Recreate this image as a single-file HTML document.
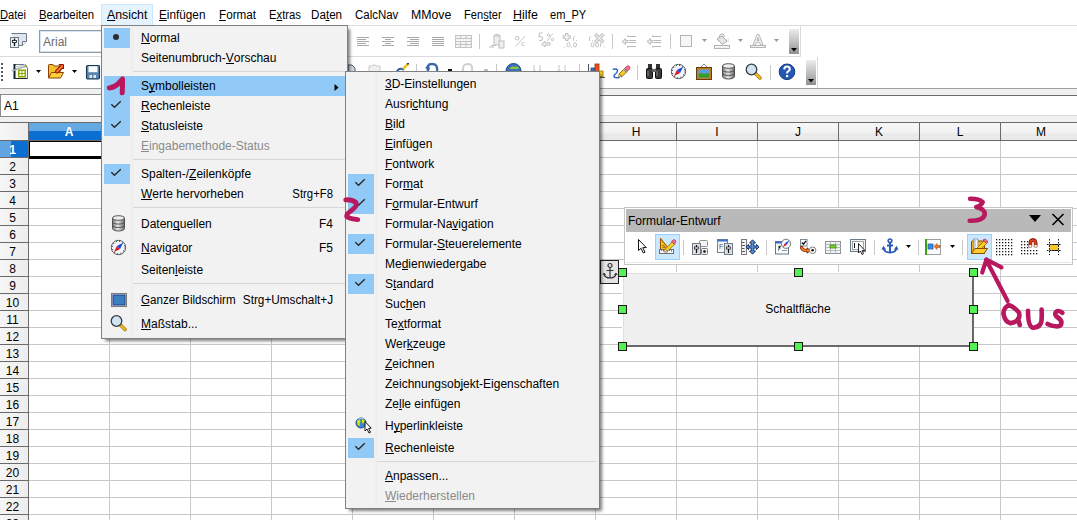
<!DOCTYPE html><html><head><meta charset="utf-8"><style>
*{margin:0;padding:0;box-sizing:border-box}
html,body{width:1077px;height:520px;overflow:hidden;background:#fff}
body{position:relative;font-family:"Liberation Sans",sans-serif;font-size:12px;color:#000}
.a{position:absolute}
.t{position:absolute;white-space:pre;line-height:14px;font-size:12px}
u{text-decoration:none;border-bottom:1px solid currentColor;display:inline-block;line-height:12px;height:12px}
</style></head><body>
<div class="a" style="left:0px;top:25px;width:1077px;height:1px;background:#dadada"></div>
<div class="a" style="left:101px;top:4px;width:52px;height:21px;background:#e5f3ff;border:1px solid #cce8ff;border-bottom:none"></div>
<div class="t " style="left:0.4px;top:8px;transform:scaleX(0.93);transform-origin:0 0;"><u>D</u>atei</div>
<div class="t " style="left:39.4px;top:8px;transform:scaleX(0.948);transform-origin:0 0;"><u>B</u>earbeiten</div>
<div class="t " style="left:107px;top:8px;transform:scaleX(1.026);transform-origin:0 0;"><u>A</u>nsicht</div>
<div class="t " style="left:159.4px;top:8px;transform:scaleX(0.98);transform-origin:0 0;"><u>E</u>infügen</div>
<div class="t " style="left:218.6px;top:8px;transform:scaleX(0.974);transform-origin:0 0;"><u>F</u>ormat</div>
<div class="t " style="left:268.7px;top:8px;transform:scaleX(0.94);transform-origin:0 0;">E<u>x</u>tras</div>
<div class="t " style="left:311.4px;top:8px;transform:scaleX(0.97);transform-origin:0 0;">Da<u>t</u>en</div>
<div class="t " style="left:354.5px;top:8px;transform:scaleX(0.955);transform-origin:0 0;">CalcNav</div>
<div class="t " style="left:410.5px;top:8px;transform:scaleX(1.026);transform-origin:0 0;">MMove</div>
<div class="t " style="left:463.7px;top:8px;transform:scaleX(0.925);transform-origin:0 0;">Fen<u>s</u>ter</div>
<div class="t " style="left:513.2px;top:8px;transform:scaleX(1.04);transform-origin:0 0;"><u>H</u>ilfe</div>
<div class="t " style="left:550.3px;top:8px;transform:scaleX(0.92);transform-origin:0 0;">em_PY</div>
<div class="a" style="left:0px;top:56px;width:801px;height:1px;background:#dadada"></div>
<div class="a" style="left:800px;top:26px;width:1px;height:31px;background:#dadada"></div>
<div class="a" style="left:817px;top:57px;width:1px;height:31px;background:#dadada"></div>
<div class="a" style="left:0px;top:88px;width:1077px;height:1px;background:#a0a0a0"></div>
<div class="a" style="left:0px;top:89px;width:1077px;height:6px;background:#f0f0f0"></div>
<div class="a" style="left:0px;top:95px;width:1077px;height:1px;background:#6a6a6a"></div>
<div class="a" style="left:0px;top:115px;width:1077px;height:1px;background:#dcdcdc"></div>
<div class="a" style="left:0px;top:116px;width:1077px;height:6px;background:#f0f0f0"></div>
<div class="a" style="left:0px;top:122px;width:1077px;height:1px;background:#6a6a6a"></div>
<div class="a" style="left:0px;top:94px;width:102px;height:23px;background:#fff;border:1px solid #8a8a8a"></div>
<div class="t " style="left:4px;top:99px;">A1</div>
<svg class="a" style="left:9px;top:32px;" width="19" height="17" viewBox="0 0 19 17"><path d="M2.5 1.5 H17.5 V9.5 L13.5 13.5 H8" fill="#dfe5ee" stroke="#6e7a85"/><path d="M17.5 9.5 H13.5 V13.5" fill="#fff" stroke="#6e7a85"/><rect x="1.5" y="5.5" width="8" height="10" fill="#eef0f2" stroke="#6e7a85"/><path d="M5.5 6.5 V14" stroke="#111" stroke-width="1.3"/><rect x="3.5" y="8.5" width="4" height="2" fill="#fff" stroke="#111" stroke-width=".8"/></svg>
<div class="a" style="left:39px;top:30px;width:70px;height:23px;background:#fff;border:1px solid #9a9a9a;box-shadow:inset 0 0 0 1px #cfe6fb"></div>
<div class="t " style="left:43px;top:35px;color:#6d6d6d;">Arial</div>
<div class="a" style="left:357px;top:37px;width:12px;height:1px;background:#a8a8a8"></div><div class="a" style="left:357px;top:39px;width:9px;height:1px;background:#a8a8a8"></div><div class="a" style="left:357px;top:41px;width:12px;height:1px;background:#a8a8a8"></div><div class="a" style="left:357px;top:43px;width:9px;height:1px;background:#a8a8a8"></div><div class="a" style="left:357px;top:45px;width:12px;height:1px;background:#a8a8a8"></div>
<div class="a" style="left:382px;top:37px;width:12px;height:1px;background:#a8a8a8"></div><div class="a" style="left:385px;top:39px;width:6px;height:1px;background:#a8a8a8"></div><div class="a" style="left:382px;top:41px;width:12px;height:1px;background:#a8a8a8"></div><div class="a" style="left:385px;top:43px;width:6px;height:1px;background:#a8a8a8"></div><div class="a" style="left:382px;top:45px;width:12px;height:1px;background:#a8a8a8"></div>
<div class="a" style="left:407px;top:37px;width:12px;height:1px;background:#a8a8a8"></div><div class="a" style="left:410px;top:39px;width:9px;height:1px;background:#a8a8a8"></div><div class="a" style="left:407px;top:41px;width:12px;height:1px;background:#a8a8a8"></div><div class="a" style="left:410px;top:43px;width:9px;height:1px;background:#a8a8a8"></div><div class="a" style="left:407px;top:45px;width:12px;height:1px;background:#a8a8a8"></div>
<div class="a" style="left:432px;top:37px;width:12px;height:1px;background:#a8a8a8"></div><div class="a" style="left:432px;top:39px;width:12px;height:1px;background:#a8a8a8"></div><div class="a" style="left:432px;top:41px;width:12px;height:1px;background:#a8a8a8"></div><div class="a" style="left:432px;top:43px;width:12px;height:1px;background:#a8a8a8"></div><div class="a" style="left:432px;top:45px;width:12px;height:1px;background:#a8a8a8"></div>
<svg class="a" style="left:455px;top:35px;" width="17" height="13" viewBox="0 0 17 13"><rect x=".5" y=".5" width="16" height="12" fill="#f4f4f4" stroke="#c4c4c4"/><path d="M.5 3.5 H16.5 M.5 6.5 H16.5 M.5 9.5 H16.5 M5.5 .5 V3.5 M11 .5 V3.5 M5.5 6.5 V12.5 M11 6.5 V12.5" stroke="#c4c4c4"/></svg>
<div class="a" style="left:479px;top:34px;width:1px;height:15px;background:#c8c8c8"></div>
<svg class="a" style="left:488px;top:33px;" width="17" height="16" viewBox="0 0 17 16"><g fill="#eee" stroke="#c0c0c0"><ellipse cx="9" cy="3" rx="3" ry="1.5"/><rect x="6" y="3" width="6" height="9"/><rect x="11" y="8" width="5" height="7"/></g><path d="M1 14 H6 M3 12.5 H8" stroke="#c0c0c0"/></svg>
<svg class="a" style="left:514px;top:35px;" width="12" height="12" viewBox="0 0 12 12"><circle cx="3.2" cy="3.2" r="1.8" fill="none" stroke="#c4c4c4"/><path d="M2 11 L11 1" stroke="#c4c4c4"/><path d="M10.5 7.8 Q9.5 7 8.3 7.5 Q7 8.5 7.8 10 Q9 11 10.5 10" fill="none" stroke="#c4c4c4"/></svg>
<svg class="a" style="left:537px;top:32px;" width="19" height="16" viewBox="0 0 19 16"><path d="M5.5 1 H2.5 L2 4.5 Q5.5 4 5.5 6.5 Q5.5 9 2 8.5" fill="none" stroke="#c4c4c4" stroke-width="1.1"/><circle cx="11.5" cy="3" r="1.2" fill="none" stroke="#c4c4c4"/><path d="M10 9 L16 1.5" stroke="#c4c4c4"/><circle cx="15.5" cy="7.5" r="1.2" fill="none" stroke="#c4c4c4"/><path d="M4.5 12 L8 9 V10.8 H13 V13.2 H8 V15 Z" fill="#ececec" stroke="#bcbcbc" stroke-width=".9"/></svg>
<svg class="a" style="left:562px;top:32px;" width="18" height="16" viewBox="0 0 18 16"><path d="M3.5 1.5 H6 V3.8 H8.3 V6.3 H6 V8.5 H3.5 V6.3 H1.2 V3.8 H3.5 Z" fill="#f4f4f4" stroke="#bdbdbd"/><path d="M11.5 9 V5.5 Q11.5 4.5 13 4.5" fill="none" stroke="#c4c4c4"/><rect x="14" y="8" width="1" height="1" fill="#c4c4c4"/><path d="M2 15 H3 M6.5 10.5 Q5 10.5 5 12.8 Q5 15 6.5 15 Q8 15 8 12.8 Q8 10.5 6.5 10.5 M9 15 H10 M13 10.5 Q11.5 10.5 11.5 12.8 Q11.5 15 13 15 Q14.5 15 14.5 12.8 Q14.5 10.5 13 10.5" fill="none" stroke="#c4c4c4"/></svg>
<svg class="a" style="left:588px;top:32px;" width="18" height="16" viewBox="0 0 18 16"><path d="M1.5 9 V5.5 Q1.5 4.5 3 4.5" fill="none" stroke="#c4c4c4"/><rect x="4" y="8" width="1" height="1" fill="#c4c4c4"/><path d="M7 2 L15.5 10.5 M15.5 2 L7 10.5" stroke="#bdbdbd" stroke-width="3.2"/><path d="M7 2 L15.5 10.5 M15.5 2 L7 10.5" stroke="#f0f0f0" stroke-width="1.2"/><path d="M4.5 10.5 Q3 10.5 3 12.8 Q3 15 4.5 15 Q6 15 6 12.8 Q6 10.5 4.5 10.5 M9 10.5 Q7.5 10.5 7.5 12.8 Q7.5 15 9 15 Q10.5 15 10.5 12.8 Q10.5 10.5 9 10.5 M12.5 15 V11.5 Q12.5 10.5 14 10.5 M15.5 15 H16.5" fill="none" stroke="#c4c4c4"/></svg>
<div class="a" style="left:612px;top:34px;width:1px;height:15px;background:#c8c8c8"></div>
<svg class="a" style="left:621px;top:34px;" width="17" height="15" viewBox="0 0 17 15"><path d="M6 2.5 H15 M7.5 6.5 H15 M7.5 8.5 H15 M6 12.5 H15" stroke="#b8b8b8"/><path d="M7 1 V3 M7 12 V14" stroke="#c8c8c8"/><path d="M1 7.5 L4.5 4.5 V6.5 H6.5 V8.5 H4.5 V10.5 Z" fill="#e8e8e8" stroke="#b0b0b0" stroke-width=".8"/></svg>
<svg class="a" style="left:646px;top:34px;" width="17" height="15" viewBox="0 0 17 15"><path d="M6 2.5 H15 M7.5 6.5 H15 M7.5 8.5 H15 M6 12.5 H15" stroke="#b8b8b8"/><path d="M7 1 V3 M7 12 V14" stroke="#c8c8c8"/><path d="M1 7.5 L4.5 4.5 V6.5 H6.5 V8.5 H4.5 V10.5 Z" fill="#e8e8e8" stroke="#b0b0b0" stroke-width=".8"/></svg>
<div class="a" style="left:670px;top:34px;width:1px;height:15px;background:#c8c8c8"></div>
<div class="a" style="left:680px;top:35px;width:12px;height:12px;background:#f6f6f6;border:1px solid #b4b4b4"></div>
<svg class="a" style="left:702px;top:39px;" width="5" height="3" viewBox="0 0 5 3"><path d="M0 0 H5 L2.5 3 Z" fill="#9a9a9a"/></svg>
<svg class="a" style="left:714px;top:33px;" width="17" height="16" viewBox="0 0 17 16"><path d="M3 6 L8 3 L13 8 L8.5 11.5 Z" fill="#e4e4e4" stroke="#a8a8a8"/><path d="M13 8 L15 10 L15 4 Z" fill="#e8e8e8"/><path d="M5 4 Q6 0 9 1 Q11 2 10 4 M7 3.5 L9 3" fill="none" stroke="#b0b0b0"/><rect x=".5" y="12.5" width="15" height="3" fill="#f2f2f2" stroke="#b4b4b4"/></svg>
<svg class="a" style="left:738px;top:39px;" width="5" height="3" viewBox="0 0 5 3"><path d="M0 0 H5 L2.5 3 Z" fill="#9a9a9a"/></svg>
<svg class="a" style="left:750px;top:33px;" width="16" height="13" viewBox="0 0 16 13"><path d="M3 12 L7 1.5 H9 L13 12 H10.5 L9.6 9.5 H6.4 L5.5 12 Z M7 7.5 H9 L8 4.5 Z" fill="#f0f0f0" stroke="#b8b8b8"/></svg>
<div class="a" style="left:750px;top:45px;width:16px;height:3px;background:#f2f2f2;border:1px solid #b4b4b4"></div>
<svg class="a" style="left:774px;top:39px;" width="5" height="3" viewBox="0 0 5 3"><path d="M0 0 H5 L2.5 3 Z" fill="#9a9a9a"/></svg>
<div class="a" style="left:789px;top:29px;width:10px;height:25px;background:linear-gradient(#ececec,#b8b8b8 60%,#8e8e8e)"></div><svg class="a" style="left:791px;top:48px;" width="6" height="4" viewBox="0 0 6 4"><path d="M0 0 H6 L3 3.5 Z" fill="#000"/></svg>
<div class="a" style="left:1px;top:63px;width:2px;height:2px;background:#5a5a5a"></div>
<div class="a" style="left:1px;top:67px;width:2px;height:2px;background:#5a5a5a"></div>
<div class="a" style="left:1px;top:71px;width:2px;height:2px;background:#5a5a5a"></div>
<div class="a" style="left:1px;top:75px;width:2px;height:2px;background:#5a5a5a"></div>
<div class="a" style="left:1px;top:79px;width:2px;height:2px;background:#5a5a5a"></div>
<svg class="a" style="left:11px;top:63px;" width="18" height="17" viewBox="0 0 18 17"><path d="M3.5 1.5 H13 L16.5 5 V15.5 H3.5 Z" fill="#fbfbfb" stroke="#6a7480"/><path d="M3.5 1 V16" stroke="#101c30" stroke-width="2"/><path d="M3 15.5 H16.5" stroke="#202830"/><path d="M1 8 Q8 5 16 3" stroke="#a8b0b8" stroke-width="1.5" fill="none"/><path d="M4 4 Q10 3 14 2" stroke="#c0c8d0" stroke-width="1.2" fill="none"/><path d="M14 1.5 L16 4" stroke="#7a9a10" stroke-width="1.2"/><rect x="7" y="6.5" width="8" height="8" fill="#8aaa00"/><rect x="8.5" y="8" width="2" height="2" fill="#fff"/><rect x="11.5" y="8" width="2" height="2" fill="#fff"/><rect x="8.5" y="11" width="2" height="2" fill="#fff"/><rect x="11.5" y="11" width="2" height="2" fill="#fff"/></svg>
<svg class="a" style="left:36px;top:70px;" width="5" height="3" viewBox="0 0 5 3"><path d="M0 0 H5 L2.5 3 Z" fill="#000"/></svg>
<svg class="a" style="left:47px;top:63px;" width="18" height="17" viewBox="0 0 18 17"><path d="M1.5 14.5 V2.2 Q1.5 1.5 2.2 1.5 H6 L7 3 H13 V14.5 Z" fill="#f6c030" stroke="#8a4000" stroke-width="1" stroke-linejoin="round"/><path d="M1.5 15 L4.5 9.5 H16.5 L13.5 15 Z" fill="#ffd040" stroke="#8a4000" stroke-width="1" stroke-linejoin="round"/><path d="M10 8.5 L14.5 4" stroke="#901800" stroke-width="4" stroke-linecap="round"/><path d="M12 1.5 H16.5 V6 Z" fill="#f06020" stroke="#901800" stroke-width="1" stroke-linejoin="round"/><path d="M10 8.5 L14.5 4" stroke="#f87830" stroke-width="2" stroke-linecap="round"/></svg>
<svg class="a" style="left:72px;top:70px;" width="5" height="3" viewBox="0 0 5 3"><path d="M0 0 H5 L2.5 3 Z" fill="#000"/></svg>
<svg class="a" style="left:85px;top:64px;" width="16" height="16" viewBox="0 0 16 16"><rect x="1.5" y="1.5" width="13" height="13.5" rx="1.2" fill="#5a86b0" stroke="#173556" stroke-width="1.1"/><rect x="3.5" y="2.2" width="9" height="6" fill="#fbfbfb"/><rect x="4.5" y="11" width="2.5" height="3" fill="#e4e8ec"/><rect x="8.5" y="11" width="2.5" height="3" fill="#e4e8ec"/></svg>
<svg class="a" style="left:347px;top:63px;" width="10" height="9" viewBox="0 0 10 9"><path d="M1 8 V2 H5 L8 5 V8" fill="#cfd6de" stroke="#505a64"/></svg>
<svg class="a" style="left:366px;top:63px;" width="17" height="9" viewBox="0 0 17 9"><path d="M3 8 V3 H6 Q8 0 10 3 H14 V8" fill="#f0f0f0" stroke="#c8c8c8"/></svg>
<svg class="a" style="left:395px;top:63px;" width="15" height="9" viewBox="0 0 15 9"><path d="M2 8 Q5 4 9 7" stroke="#2a60b0" stroke-width="2" fill="none"/><path d="M8 6 L13 1" stroke="#f0c020" stroke-width="2.5"/><path d="M12 1 L14 .5" stroke="#333" stroke-width="1.5"/></svg>
<div class="a" style="left:416px;top:64px;width:1px;height:8px;background:#c8c8c8"></div>
<svg class="a" style="left:423px;top:62px;" width="18" height="10" viewBox="0 0 18 10"><path d="M5 9 Q3 2 9 2 Q15 2 14 9" stroke="#3c68a8" stroke-width="2.3" fill="none"/><path d="M2 6 L6 2 L7 8 Z" fill="#3c68a8"/></svg>
<div class="a" style="left:448px;top:69px;width:4px;height:2px;background:#111"></div>
<svg class="a" style="left:460px;top:62px;" width="16" height="10" viewBox="0 0 16 10"><path d="M3 9 Q2 2 8 2 Q13 2 12 9" stroke="#cfcfcf" stroke-width="2" fill="none"/></svg>
<div class="a" style="left:484px;top:69px;width:4px;height:2px;background:#c0c0c0"></div>
<div class="a" style="left:496px;top:64px;width:1px;height:8px;background:#c8c8c8"></div>
<svg class="a" style="left:505px;top:63px;" width="17" height="9" viewBox="0 0 17 9"><circle cx="8.5" cy="8" r="7.5" fill="#3a70b8" stroke="#1e4a8a"/><path d="M4 6 Q7 2 10 4 Q13 2 14 6" fill="#8cc43c"/></svg>
<svg class="a" style="left:531px;top:64px;" width="13" height="8" viewBox="0 0 13 8"><path d="M3 7 V1 M9 7 V1 M2 7 H5 M8 7 H11" stroke="#c8c8c8"/></svg>
<svg class="a" style="left:556px;top:64px;" width="13" height="8" viewBox="0 0 13 8"><path d="M3 7 V1 M9 7 V1 M1 7 H5" stroke="#c8c8c8"/></svg>
<div class="a" style="left:579px;top:64px;width:1px;height:8px;background:#c8c8c8"></div>
<div class="a" style="left:588px;top:64px;width:1px;height:8px;background:#505050"></div>
<svg class="a" style="left:589px;top:63px;" width="16" height="16" viewBox="0 0 16 16"><rect x="2" y="5" width="4" height="9" fill="#3a70b8" stroke="#1e4a8a" stroke-width=".8"/><rect x="6" y="1" width="4" height="13" fill="#e8501c" stroke="#a02a08" stroke-width=".8"/><rect x="10" y="8" width="4" height="6" fill="#f2c22c" stroke="#a07808" stroke-width=".8"/><path d="M0 14.5 H16" stroke="#555"/></svg>
<svg class="a" style="left:608px;top:60px;" width="28" height="22" viewBox="0 0 28 22"><path d="M5.3 9.3 Q8 8.5 9.5 10 Q10 12 7.5 14 Q5 16 6.5 17.3 Q8 18 11 17.5" stroke="#2a6ad0" stroke-width="1.5" fill="none" stroke-linecap="round"/><path d="M11.2 13.8 L15.5 9.5 L18.3 12.3 L14 16.6 Z" fill="#f8cc18" stroke="#6a5010" stroke-width=".8" stroke-linejoin="round"/><path d="M10.5 17.3 L11.2 13.8 L14 16.6 Z" fill="#f4e8d0" stroke="#6a5010" stroke-width=".7" stroke-linejoin="round"/><path d="M15.5 9.5 L16.5 8.5 L19.3 11.3 L18.3 12.3 Z" fill="#b8c0c8" stroke="#606870" stroke-width=".6"/><path d="M16.5 8.5 L18.6 6.3 Q20 5.2 21.4 6.3 L21.6 6.6 Q22.6 8 21.4 9.2 L19.3 11.3 Z" fill="#f07088" stroke="#a03050" stroke-width=".7"/></svg>
<div class="a" style="left:637px;top:65px;width:1px;height:15px;background:#c8c8c8"></div>
<svg class="a" style="left:645px;top:63px;" width="18" height="17" viewBox="0 0 18 17"><rect x="3" y="1" width="4" height="5" fill="#333"/><rect x="11" y="1" width="4" height="5" fill="#333"/><rect x="1.5" y="5.5" width="6" height="10" rx="1" fill="#3a3a3a" stroke="#111"/><rect x="10.5" y="5.5" width="6" height="10" rx="1" fill="#3a3a3a" stroke="#111"/><rect x="7" y="6" width="4" height="3" fill="#666"/><path d="M3 8 V13 M12 8 V13" stroke="#888"/></svg>
<svg class="a" style="left:670px;top:63px;" width="17" height="17" viewBox="0 0 17 17"><circle cx="8.5" cy="8.5" r="7.2" fill="#f2f5f9" stroke="#5a5a5a" stroke-width="1"/><circle cx="8.5" cy="8.5" r="6.2" fill="none" stroke="#444" stroke-width="1.1" stroke-dasharray="0.9 2.35"/><path d="M4 13 L6.9 6.9 L10.1 10.1 Z" fill="#e01818"/><path d="M13.2 3.8 L6.9 6.9 L10.1 10.1 Z" fill="#1a48e0"/></svg>
<svg class="a" style="left:695px;top:62px;" width="18" height="19" viewBox="0 0 18 19"><path d="M6 5 L9 2 L12 5" fill="none" stroke="#888"/><rect x="1.5" y="5.5" width="15" height="12" fill="#c08018" stroke="#6a3a08"/><rect x="3.5" y="7.5" width="11" height="8" fill="#5aa0e0"/><path d="M3.5 12 Q7 10 9 12 Q12 10 14.5 12 V15.5 H3.5 Z" fill="#3a9a2a"/></svg>
<svg class="a" style="left:721px;top:63px;" width="15" height="17" viewBox="0 0 15 17"><defs><linearGradient id="dbg2" x1="0" x2="1"><stop offset="0" stop-color="#7d7d7d"/><stop offset=".45" stop-color="#e8e8e8"/><stop offset="1" stop-color="#6a6a6a"/></linearGradient></defs><path d="M1.5 3 V13.5 A6 2.5 0 0 0 13.5 13.5 V3" fill="url(#dbg2)" stroke="#505050"/><ellipse cx="7.5" cy="3" rx="6" ry="2.3" fill="#eee" stroke="#505050"/><path d="M1.5 6.8 A6 2.3 0 0 0 13.5 6.8 M1.5 10.2 A6 2.3 0 0 0 13.5 10.2" fill="none" stroke="#505050"/></svg>
<svg class="a" style="left:745px;top:63px;" width="17" height="17" viewBox="0 0 17 17"><path d="M10.5 10.5 L15 15" stroke="#a07000" stroke-width="3.4" stroke-linecap="round"/><path d="M10.5 10.5 L15 15" stroke="#f0c020" stroke-width="2" stroke-linecap="round"/><circle cx="6.5" cy="6.5" r="5.3" fill="#cfe3f5" stroke="#3a3a3a" stroke-width="1.3"/></svg>
<div class="a" style="left:770px;top:65px;width:1px;height:15px;background:#c8c8c8"></div>
<svg class="a" style="left:778px;top:63px;" width="18" height="18" viewBox="0 0 18 18"><circle cx="9" cy="8.8" r="7.8" fill="#2456b4" stroke="#123a80"/><path d="M6.3 6.5 Q6.3 3.5 9 3.5 Q11.8 3.5 11.8 6 Q11.8 7.5 10 8.5 Q9 9 9 10.5" fill="none" stroke="#fff" stroke-width="2"/><rect x="8" y="12" width="2.2" height="2.2" fill="#fff"/></svg>
<div class="a" style="left:806px;top:60px;width:10px;height:25px;background:linear-gradient(#ececec,#b8b8b8 60%,#8e8e8e)"></div><svg class="a" style="left:808px;top:79px;" width="6" height="4" viewBox="0 0 6 4"><path d="M0 0 H6 L3 3.5 Z" fill="#000"/></svg>
<div class="a" style="left:0px;top:123px;width:1077px;height:17px;background:linear-gradient(#f6f6f6 0,#f3f3f3 55%,#ebebeb 60%,#e9e9e9 100%)"></div>
<div class="a" style="left:0px;top:140px;width:1077px;height:1px;background:#6a6a6a"></div>
<div class="a" style="left:0px;top:123px;width:28px;height:17px;background:linear-gradient(to right,#f7f7f7,#ececec)"></div>
<div class="a" style="left:28px;top:123px;width:1px;height:17px;background:#6a6a6a"></div>
<div class="a" style="left:109px;top:123px;width:1px;height:17px;background:#6a6a6a"></div>
<div class="a" style="left:190px;top:123px;width:1px;height:17px;background:#6a6a6a"></div>
<div class="a" style="left:271px;top:123px;width:1px;height:17px;background:#6a6a6a"></div>
<div class="a" style="left:352px;top:123px;width:1px;height:17px;background:#6a6a6a"></div>
<div class="a" style="left:433px;top:123px;width:1px;height:17px;background:#6a6a6a"></div>
<div class="a" style="left:514px;top:123px;width:1px;height:17px;background:#6a6a6a"></div>
<div class="a" style="left:595px;top:123px;width:1px;height:17px;background:#6a6a6a"></div>
<div class="a" style="left:676px;top:123px;width:1px;height:17px;background:#6a6a6a"></div>
<div class="a" style="left:757px;top:123px;width:1px;height:17px;background:#6a6a6a"></div>
<div class="a" style="left:838px;top:123px;width:1px;height:17px;background:#6a6a6a"></div>
<div class="a" style="left:919px;top:123px;width:1px;height:17px;background:#6a6a6a"></div>
<div class="a" style="left:1000px;top:123px;width:1px;height:17px;background:#6a6a6a"></div>
<div class="a" style="left:1081px;top:123px;width:1px;height:17px;background:#6a6a6a"></div>
<div class="a" style="left:29px;top:123px;width:80px;height:8px;background:#63a9e3"></div>
<div class="a" style="left:29px;top:131px;width:80px;height:9px;background:#0a6fd1"></div>
<div class="t" style="left:29px;width:80px;text-align:center;top:125px;color:#fff;font-weight:bold">A</div>
<div class="t" style="left:110px;width:80px;text-align:center;top:125px;color:#000">B</div>
<div class="t" style="left:191px;width:80px;text-align:center;top:125px;color:#000">C</div>
<div class="t" style="left:272px;width:80px;text-align:center;top:125px;color:#000">D</div>
<div class="t" style="left:353px;width:80px;text-align:center;top:125px;color:#000">E</div>
<div class="t" style="left:434px;width:80px;text-align:center;top:125px;color:#000">F</div>
<div class="t" style="left:515px;width:80px;text-align:center;top:125px;color:#000">G</div>
<div class="t" style="left:596px;width:80px;text-align:center;top:125px;color:#000">H</div>
<div class="t" style="left:677px;width:80px;text-align:center;top:125px;color:#000">I</div>
<div class="t" style="left:758px;width:80px;text-align:center;top:125px;color:#000">J</div>
<div class="t" style="left:839px;width:80px;text-align:center;top:125px;color:#000">K</div>
<div class="t" style="left:920px;width:80px;text-align:center;top:125px;color:#000">L</div>
<div class="t" style="left:1001px;width:80px;text-align:center;top:125px;color:#000">M</div>
<div class="t" style="left:1082px;width:80px;text-align:center;top:125px;color:#000">N</div>
<div class="a" style="left:0px;top:141px;width:28px;height:379px;background:linear-gradient(to right,#f6f6f6 0,#f2f2f2 40%,#ededed 100%)"></div>
<div class="a" style="left:28px;top:123px;width:1px;height:397px;background:#6a6a6a"></div>
<div class="a" style="left:29px;top:141px;width:1048px;height:379px;background-image:linear-gradient(to right,transparent 80px,#c8c8c8 80px),linear-gradient(to bottom,transparent 16px,#c8c8c8 16px);background-size:81px 17px,81px 17px"></div>
<div class="a" style="left:0px;top:157px;width:28px;height:1px;background:#6a6a6a"></div>
<div class="a" style="left:0px;top:174px;width:28px;height:1px;background:#6a6a6a"></div>
<div class="a" style="left:0px;top:191px;width:28px;height:1px;background:#6a6a6a"></div>
<div class="a" style="left:0px;top:208px;width:28px;height:1px;background:#6a6a6a"></div>
<div class="a" style="left:0px;top:225px;width:28px;height:1px;background:#6a6a6a"></div>
<div class="a" style="left:0px;top:242px;width:28px;height:1px;background:#6a6a6a"></div>
<div class="a" style="left:0px;top:259px;width:28px;height:1px;background:#6a6a6a"></div>
<div class="a" style="left:0px;top:276px;width:28px;height:1px;background:#6a6a6a"></div>
<div class="a" style="left:0px;top:293px;width:28px;height:1px;background:#6a6a6a"></div>
<div class="a" style="left:0px;top:310px;width:28px;height:1px;background:#6a6a6a"></div>
<div class="a" style="left:0px;top:327px;width:28px;height:1px;background:#6a6a6a"></div>
<div class="a" style="left:0px;top:344px;width:28px;height:1px;background:#6a6a6a"></div>
<div class="a" style="left:0px;top:361px;width:28px;height:1px;background:#6a6a6a"></div>
<div class="a" style="left:0px;top:378px;width:28px;height:1px;background:#6a6a6a"></div>
<div class="a" style="left:0px;top:395px;width:28px;height:1px;background:#6a6a6a"></div>
<div class="a" style="left:0px;top:412px;width:28px;height:1px;background:#6a6a6a"></div>
<div class="a" style="left:0px;top:429px;width:28px;height:1px;background:#6a6a6a"></div>
<div class="a" style="left:0px;top:446px;width:28px;height:1px;background:#6a6a6a"></div>
<div class="a" style="left:0px;top:463px;width:28px;height:1px;background:#6a6a6a"></div>
<div class="a" style="left:0px;top:480px;width:28px;height:1px;background:#6a6a6a"></div>
<div class="a" style="left:0px;top:497px;width:28px;height:1px;background:#6a6a6a"></div>
<div class="a" style="left:0px;top:514px;width:28px;height:1px;background:#6a6a6a"></div>
<div class="a" style="left:0px;top:531px;width:28px;height:1px;background:#6a6a6a"></div>
<div class="a" style="left:0px;top:141px;width:11px;height:16px;background:#5ea5e2"></div>
<div class="a" style="left:11px;top:141px;width:17px;height:16px;background:#0a6fd1"></div>
<div class="t" style="left:0px;width:25px;text-align:center;top:143px;color:#fff;font-weight:bold">1</div>
<div class="t" style="left:0px;width:25px;text-align:center;top:160px;color:#000">2</div>
<div class="t" style="left:0px;width:25px;text-align:center;top:177px;color:#000">3</div>
<div class="t" style="left:0px;width:25px;text-align:center;top:194px;color:#000">4</div>
<div class="t" style="left:0px;width:25px;text-align:center;top:211px;color:#000">5</div>
<div class="t" style="left:0px;width:25px;text-align:center;top:228px;color:#000">6</div>
<div class="t" style="left:0px;width:25px;text-align:center;top:245px;color:#000">7</div>
<div class="t" style="left:0px;width:25px;text-align:center;top:262px;color:#000">8</div>
<div class="t" style="left:0px;width:25px;text-align:center;top:279px;color:#000">9</div>
<div class="t" style="left:0px;width:25px;text-align:center;top:296px;color:#000">10</div>
<div class="t" style="left:0px;width:25px;text-align:center;top:313px;color:#000">11</div>
<div class="t" style="left:0px;width:25px;text-align:center;top:330px;color:#000">12</div>
<div class="t" style="left:0px;width:25px;text-align:center;top:347px;color:#000">13</div>
<div class="t" style="left:0px;width:25px;text-align:center;top:364px;color:#000">14</div>
<div class="t" style="left:0px;width:25px;text-align:center;top:381px;color:#000">15</div>
<div class="t" style="left:0px;width:25px;text-align:center;top:398px;color:#000">16</div>
<div class="t" style="left:0px;width:25px;text-align:center;top:415px;color:#000">17</div>
<div class="t" style="left:0px;width:25px;text-align:center;top:432px;color:#000">18</div>
<div class="t" style="left:0px;width:25px;text-align:center;top:449px;color:#000">19</div>
<div class="t" style="left:0px;width:25px;text-align:center;top:466px;color:#000">20</div>
<div class="t" style="left:0px;width:25px;text-align:center;top:483px;color:#000">21</div>
<div class="t" style="left:0px;width:25px;text-align:center;top:500px;color:#000">22</div>
<div class="t" style="left:0px;width:25px;text-align:center;top:517px;color:#000">23</div>
<div class="a" style="left:29px;top:141px;width:81px;height:1px;background:#000"></div>
<div class="a" style="left:29px;top:141px;width:1px;height:17px;background:#000"></div>
<div class="a" style="left:29px;top:156px;width:81px;height:3px;background:#000"></div>
<div class="a" style="left:622px;top:272px;width:352px;height:75px;background:#fff"></div>
<div class="a" style="left:623px;top:273px;width:351px;height:74px;background:#f0f0f0;border-top:1px solid #e0e0e0;border-left:1px solid #e0e0e0;border-right:2px solid #696969;border-bottom:2px solid #696969"></div>
<div class="t" style="left:622px;width:352px;text-align:center;top:302px">Schaltfläche</div>
<div class="a" style="left:600px;top:260px;width:19px;height:24px;background:#e4e4e4;border:1px solid #222"></div>
<svg class="a" style="left:601px;top:262px;" width="18" height="20" viewBox="0 0 18 20"><circle cx="9" cy="3.5" r="2" fill="none" stroke="#333" stroke-width="1.2"/><path d="M9 5.5 V16 M5.5 8.5 H12.5 M3 12 Q4 16 9 16 Q14 16 15 12" fill="none" stroke="#333" stroke-width="1.2"/><path d="M2 13 L3 11 L4.5 13 M16 13 L15 11 L13.5 13" fill="none" stroke="#333"/></svg>
<div class="a" style="left:618px;top:268px;width:9px;height:9px;background:#54f054;border:1px solid #1a1a1a"></div>
<div class="a" style="left:618px;top:305px;width:9px;height:9px;background:#54f054;border:1px solid #1a1a1a"></div>
<div class="a" style="left:618px;top:342px;width:9px;height:9px;background:#54f054;border:1px solid #1a1a1a"></div>
<div class="a" style="left:794px;top:268px;width:9px;height:9px;background:#54f054;border:1px solid #1a1a1a"></div>
<div class="a" style="left:794px;top:342px;width:9px;height:9px;background:#54f054;border:1px solid #1a1a1a"></div>
<div class="a" style="left:969px;top:268px;width:9px;height:9px;background:#54f054;border:1px solid #1a1a1a"></div>
<div class="a" style="left:969px;top:305px;width:9px;height:9px;background:#54f054;border:1px solid #1a1a1a"></div>
<div class="a" style="left:969px;top:342px;width:9px;height:9px;background:#54f054;border:1px solid #1a1a1a"></div>
<div class="a" style="left:624px;top:207px;width:449px;height:58px;background:#fff;border:1px solid #c4c4c4"></div>
<div class="a" style="left:626px;top:262px;width:445px;height:1px;background:#e8e8e8"></div>
<div class="a" style="left:626px;top:209px;width:445px;height:23px;background:#b9b9b9"></div>
<div class="t " style="left:628px;top:214px;">Formular-Entwurf</div>
<svg class="a" style="left:1029px;top:215px;" width="12" height="8" viewBox="0 0 12 8"><path d="M0 0 H12 L6 7 Z" fill="#000"/></svg>
<svg class="a" style="left:1051px;top:213px;" width="14" height="13" viewBox="0 0 14 13"><path d="M1.5 1 L12.5 12 M12.5 1 L1.5 12" stroke="#000" stroke-width="1.6"/></svg>
<div class="a" style="left:655px;top:234px;width:25px;height:26px;background:#cce8ff;border:1px solid #99d1ff"></div>
<div class="a" style="left:967px;top:234px;width:25px;height:26px;background:#cce8ff;border:1px solid #99d1ff"></div>
<svg class="a" style="left:637px;top:238px;" width="11" height="17" viewBox="0 0 11 17"><path d="M1.5 1.5 V12.5 L4 10.3 L6.3 15 L8 14.2 L5.8 9.6 L9.3 9.6 Z" fill="#fff" stroke="#111" stroke-width="1"/></svg>
<svg class="a" style="left:655px;top:234px;" width="25" height="25" viewBox="0 0 25 25"><path d="M5.5 4.5 V15.5 H14.5 Z" fill="#f6c21a" stroke="#9a5a00" stroke-width="1.1" stroke-linejoin="round"/><path d="M8 11 V13.5 H10.5 Z" fill="#cce8ff" stroke="#9a5a00" stroke-width=".8"/><rect x="4.5" y="15.5" width="14" height="4" fill="#fafafa" stroke="#6a6e72"/><path d="M6.5 16 V17 M8.5 16 V17.5 M10.5 16 V17 M12.5 16 V17.5 M14.5 16 V17 M16.5 16 V17.5" stroke="#555" stroke-width=".8"/><path d="M9 16.5 L17 8 L19.5 10.5 L11.5 18 Z" fill="#f8d020" stroke="#8a6a10" stroke-width=".8"/><path d="M9 16.5 L10.3 15.2 L12.8 17.7 L11.5 18 L9.5 18.2 Z" fill="#f0e0c0" stroke="#6a5030" stroke-width=".6"/><path d="M16.5 7.5 L18 6 Q19 5 20.5 6.5 Q21.5 7.5 20.5 8.5 L19.5 10.5 Z" fill="#f07090" stroke="#a03050" stroke-width=".7"/></svg>
<div class="a" style="left:683px;top:240px;width:1px;height:15px;background:#c8c8c8"></div>
<svg class="a" style="left:692px;top:239px;" width="17" height="16" viewBox="0 0 17 16"><rect x="7.5" y="1.5" width="8" height="6" rx="1" fill="#f4f4f4" stroke="#8a9096"/><rect x=".5" y="4.5" width="8" height="11" fill="#dde0e4" stroke="#6e7a85"/><path d="M4.5 6 V14" stroke="#111" stroke-width="1.2"/><rect x="2.5" y="8" width="4" height="2" fill="#fff" stroke="#111" stroke-width=".7"/><rect x="9.5" y="9.5" width="6" height="6" rx="1" fill="#eee" stroke="#777"/><circle cx="12.5" cy="12.5" r="1.3" fill="#111"/></svg>
<svg class="a" style="left:717px;top:239px;" width="17" height="16" viewBox="0 0 17 16"><rect x=".5" y=".5" width="10" height="13" fill="#f4f4f4" stroke="#7a8088"/><rect x=".5" y=".5" width="10" height="2" fill="#3a70d0"/><text x="2" y="10" font-size="7" fill="#555" font-family="Liberation Sans">F</text><rect x="7.5" y="4.5" width="8" height="11" fill="#dde0e4" stroke="#6e7a85"/><path d="M11.5 6 V14" stroke="#111" stroke-width="1.2"/><rect x="9.5" y="8" width="4" height="2" fill="#fff" stroke="#111" stroke-width=".7"/></svg>
<svg class="a" style="left:741px;top:239px;" width="18" height="16" viewBox="0 0 18 16"><rect x=".5" y=".5" width="5" height="15" fill="#f4f4f4" stroke="#7a7a7a"/><path d="M1 3.5 H3.5 M1 6.5 H4 M1 9.5 H3.5 M1 12.5 H4" stroke="#555"/><path d="M11.5 .8 L14.5 4 H12.8 V7 H15.5 V5.3 L18 8 L15.5 10.7 V9 H12.8 V12 H14.5 L11.5 15.2 L8.5 12 H10.2 V9 H7.5 V10.7 L5 8 L7.5 5.3 V7 H10.2 V4 H8.5 Z" fill="#5a8ad0" stroke="#102a60" stroke-width=".9"/></svg>
<div class="a" style="left:766px;top:240px;width:1px;height:15px;background:#c8c8c8"></div>
<svg class="a" style="left:772px;top:236px;" width="20" height="20" viewBox="0 0 20 20"><rect x="3.5" y="5.5" width="13" height="12.5" fill="#fafbfc" stroke="#6a727a"/><rect x="3.5" y="5.5" width="11" height="2" fill="#3a68d0"/><path d="M6.5 15 V10 H9 M6.5 12.5 H8.5 M10 14.5 H15" stroke="#8a9098" stroke-width="1"/><circle cx="14" cy="7.8" r="4.6" fill="#f4f6fa" stroke="#7a7a7a" stroke-width="1"/><path d="M10.8 11 L13.1 6.9 L14.9 8.7 Z" fill="#e01010"/><path d="M17.2 4.6 L13.1 6.9 L14.9 8.7 Z" fill="#1a50e8"/></svg>
<svg class="a" style="left:798px;top:236px;" width="20" height="20" viewBox="0 0 20 20"><rect x="2.5" y="3.5" width="6.5" height="6.5" fill="#fff" stroke="#7a8a96"/><path d="M3.8 6.5 L5.5 8.2 L8 4.8" stroke="#111" fill="none" stroke-width="1.3"/><path d="M3.5 11.5 Q4.5 14.5 8 14.5 H10.5" fill="none" stroke="#801000" stroke-width="3.2" stroke-linecap="round"/><path d="M9 11.8 L12.3 14.5 L9 17.2 Z" fill="#f08a20" stroke="#801000" stroke-width=".9" stroke-linejoin="round"/><path d="M3.5 11.5 Q4.5 14.5 8 14.5 H10.5" fill="none" stroke="#f08a20" stroke-width="1.6" stroke-linecap="round"/><circle cx="14.6" cy="14.3" r="3.3" fill="#fff" stroke="#7a8088" stroke-width="1"/><circle cx="14.6" cy="14.3" r="1.3" fill="#111"/></svg>
<svg class="a" style="left:825px;top:241px;" width="16" height="13" viewBox="0 0 16 13"><rect x=".5" y=".5" width="15" height="12" fill="#f4f4f4" stroke="#8a9096"/><path d="M.5 3.5 H15.5 M.5 6.5 H15.5 M.5 9.5 H15.5 M5.5 .5 V12.5 M10.5 .5 V12.5" stroke="#b4bac0"/><rect x="5" y="4" width="6" height="3" fill="#7ad02a" stroke="#3a8a10" stroke-width=".8"/></svg>
<svg class="a" style="left:850px;top:239px;" width="17" height="16" viewBox="0 0 17 16"><rect x=".5" y=".5" width="15" height="12" fill="#f0f0f0" stroke="#6e7a85"/><rect x="2.5" y="2.5" width="11" height="8" fill="#fff" stroke="#9aa"/><path d="M4.5 4 V9" stroke="#111"/><path d="M8.5 4.5 V14 L10.5 12 L12 15.5 L13.5 14.8 L12.2 11.6 L14.8 11.4 Z" fill="#fff" stroke="#111" stroke-width=".9"/></svg>
<div class="a" style="left:874px;top:240px;width:1px;height:15px;background:#c8c8c8"></div>
<svg class="a" style="left:881px;top:238px;" width="18" height="16" viewBox="0 0 18 16"><circle cx="9" cy="2.8" r="1.8" fill="none" stroke="#2a5aba" stroke-width="1.6"/><path d="M9 4.5 V14 M6 7.5 H12 M2.5 10 Q3 14.5 9 14.5 Q15 14.5 15.5 10" fill="none" stroke="#2a5aba" stroke-width="2"/><path d="M1 11.5 L2.5 8.5 L4.5 11.5 M17 11.5 L15.5 8.5 L13.5 11.5" fill="#2a5aba" stroke="#2a5aba"/></svg>
<svg class="a" style="left:906px;top:245px;" width="5" height="3" viewBox="0 0 5 3"><path d="M0 0 H5 L2.5 3 Z" fill="#000"/></svg>
<div class="a" style="left:918px;top:240px;width:1px;height:15px;background:#c8c8c8"></div>
<svg class="a" style="left:925px;top:239px;" width="17" height="16" viewBox="0 0 17 16"><rect x="1.5" y=".5" width="14" height="15" fill="#fafafa" stroke="#9aa0a6"/><path d="M1 0 V16" stroke="#3aa01a" stroke-width="2"/><rect x="3" y="5" width="5" height="5" fill="#3a8ae0" stroke="#1a5aa0" stroke-width=".7"/><path d="M9 7.5 L12 4.5 V6.5 H15 V8.5 H12 V10.5 Z" fill="#f07a2a" stroke="#a04a10" stroke-width=".6"/></svg>
<svg class="a" style="left:950px;top:245px;" width="5" height="3" viewBox="0 0 5 3"><path d="M0 0 H5 L2.5 3 Z" fill="#000"/></svg>
<div class="a" style="left:962px;top:240px;width:1px;height:15px;background:#c8c8c8"></div>
<svg class="a" style="left:967px;top:234px;" width="25" height="25" viewBox="0 0 25 25"><path d="M4.5 19.5 V8 Q4.5 7 5.5 7 H17.5 V19.5 Z" fill="#f0b020" stroke="#8a4a00" stroke-width="1"/><rect x="6.5" y="5" width="4.5" height="13" fill="#f4f6f8" stroke="#8a9098" stroke-width=".8"/><path d="M7 7 H9 M7 9 H8.5 M7 11 H9 M7 13 H8.5 M7 15 H9" stroke="#6a80a0" stroke-width=".8"/><path d="M10 14 L17 7 L19.5 9.5 L12.5 16.5 L10 17 Z" fill="#f8d020" stroke="#8a6a10" stroke-width=".8"/><path d="M16 6 Q17.5 4.5 19 5.5 L20.5 7 Q21 8.5 19.5 9.5 Z" fill="#f06a8a" stroke="#a03050" stroke-width=".7"/><path d="M4.5 19.5 L8 14.5 H20.5 L17 19.5 Z" fill="#fccc30" stroke="#8a4a00" stroke-width="1" stroke-linejoin="round"/></svg>
<svg class="a" style="left:995px;top:238px;" width="18" height="18" viewBox="0 0 18 18"><rect x="1" y="1" width="1.3" height="1.3" fill="#1a1a1a"/><rect x="1" y="4" width="1.3" height="1.3" fill="#1a1a1a"/><rect x="1" y="7" width="1.3" height="1.3" fill="#1a1a1a"/><rect x="1" y="10" width="1.3" height="1.3" fill="#1a1a1a"/><rect x="1" y="13" width="1.3" height="1.3" fill="#1a1a1a"/><rect x="1" y="16" width="1.3" height="1.3" fill="#1a1a1a"/><rect x="4" y="1" width="1.3" height="1.3" fill="#1a1a1a"/><rect x="4" y="4" width="1.3" height="1.3" fill="#1a1a1a"/><rect x="4" y="7" width="1.3" height="1.3" fill="#1a1a1a"/><rect x="4" y="10" width="1.3" height="1.3" fill="#1a1a1a"/><rect x="4" y="13" width="1.3" height="1.3" fill="#1a1a1a"/><rect x="4" y="16" width="1.3" height="1.3" fill="#1a1a1a"/><rect x="7" y="1" width="1.3" height="1.3" fill="#1a1a1a"/><rect x="7" y="4" width="1.3" height="1.3" fill="#1a1a1a"/><rect x="7" y="7" width="1.3" height="1.3" fill="#1a1a1a"/><rect x="7" y="10" width="1.3" height="1.3" fill="#1a1a1a"/><rect x="7" y="13" width="1.3" height="1.3" fill="#1a1a1a"/><rect x="7" y="16" width="1.3" height="1.3" fill="#1a1a1a"/><rect x="10" y="1" width="1.3" height="1.3" fill="#1a1a1a"/><rect x="10" y="4" width="1.3" height="1.3" fill="#1a1a1a"/><rect x="10" y="7" width="1.3" height="1.3" fill="#1a1a1a"/><rect x="10" y="10" width="1.3" height="1.3" fill="#1a1a1a"/><rect x="10" y="13" width="1.3" height="1.3" fill="#1a1a1a"/><rect x="10" y="16" width="1.3" height="1.3" fill="#1a1a1a"/><rect x="13" y="1" width="1.3" height="1.3" fill="#1a1a1a"/><rect x="13" y="4" width="1.3" height="1.3" fill="#1a1a1a"/><rect x="13" y="7" width="1.3" height="1.3" fill="#1a1a1a"/><rect x="13" y="10" width="1.3" height="1.3" fill="#1a1a1a"/><rect x="13" y="13" width="1.3" height="1.3" fill="#1a1a1a"/><rect x="13" y="16" width="1.3" height="1.3" fill="#1a1a1a"/><rect x="16" y="1" width="1.3" height="1.3" fill="#1a1a1a"/><rect x="16" y="4" width="1.3" height="1.3" fill="#1a1a1a"/><rect x="16" y="7" width="1.3" height="1.3" fill="#1a1a1a"/><rect x="16" y="10" width="1.3" height="1.3" fill="#1a1a1a"/><rect x="16" y="13" width="1.3" height="1.3" fill="#1a1a1a"/><rect x="16" y="16" width="1.3" height="1.3" fill="#1a1a1a"/></svg>
<svg class="a" style="left:1020px;top:240px;" width="18" height="16" viewBox="0 0 18 16"><rect x="1" y="1" width="1.3" height="1.3" fill="#1a1a1a"/><rect x="1" y="4" width="1.3" height="1.3" fill="#1a1a1a"/><rect x="1" y="7" width="1.3" height="1.3" fill="#1a1a1a"/><rect x="1" y="10" width="1.3" height="1.3" fill="#1a1a1a"/><rect x="1" y="13" width="1.3" height="1.3" fill="#1a1a1a"/><rect x="4" y="1" width="1.3" height="1.3" fill="#1a1a1a"/><rect x="4" y="4" width="1.3" height="1.3" fill="#1a1a1a"/><rect x="4" y="7" width="1.3" height="1.3" fill="#1a1a1a"/><rect x="4" y="10" width="1.3" height="1.3" fill="#1a1a1a"/><rect x="4" y="13" width="1.3" height="1.3" fill="#1a1a1a"/><rect x="7" y="1" width="1.3" height="1.3" fill="#1a1a1a"/><rect x="7" y="4" width="1.3" height="1.3" fill="#1a1a1a"/><rect x="7" y="7" width="1.3" height="1.3" fill="#1a1a1a"/><rect x="7" y="10" width="1.3" height="1.3" fill="#1a1a1a"/><rect x="7" y="13" width="1.3" height="1.3" fill="#1a1a1a"/><rect x="10" y="10" width="1.3" height="1.3" fill="#1a1a1a"/><rect x="10" y="13" width="1.3" height="1.3" fill="#1a1a1a"/><rect x="13" y="10" width="1.3" height="1.3" fill="#1a1a1a"/><rect x="13" y="13" width="1.3" height="1.3" fill="#1a1a1a"/><rect x="16" y="10" width="1.3" height="1.3" fill="#1a1a1a"/><rect x="16" y="13" width="1.3" height="1.3" fill="#1a1a1a"/></svg>
<svg class="a" style="left:1028px;top:238px;" width="10" height="10" viewBox="0 0 10 10"><path d="M1 9 V4.5 Q1 .5 5 .5 Q9 .5 9 4.5 V9 H6.3 V4.8 Q6.3 3.5 5 3.5 Q3.7 3.5 3.7 4.8 V9 Z" fill="#e83a10" stroke="#601008" stroke-width=".8"/><rect x="1.3" y="7" width="2.2" height="2" fill="#fff"/><rect x="6.5" y="7" width="2.2" height="2" fill="#fff"/></svg>
<svg class="a" style="left:1046px;top:238px;" width="17" height="18" viewBox="0 0 17 18"><rect x="3.5" y="6.5" width="9" height="6" fill="#f8c828" stroke="#111" stroke-dasharray="1.5 1"/><path d="M1 6.5 H16 M1 12.5 H16 M3.5 1 V17 M12.5 1 V17" stroke="#111" stroke-dasharray="1.5 1.5"/><rect x="4" y="7" width="8" height="5" fill="#f8c828"/></svg>
<div class="a" style="left:101px;top:25px;width:247px;height:314px;background:#f2f2f2;border:1px solid #808080;box-shadow:3px 3px 3px -1px rgba(0,0,0,.5)"></div>
<div class="a" style="left:131px;top:26px;width:3px;height:311px;background:#efefef"></div>
<div class="a" style="left:134px;top:26px;width:1px;height:311px;background:#f4f4f4"></div>
<div class="a" style="left:104px;top:28px;width:26px;height:20px;background:#91c9f7"></div>
<svg class="a" style="left:112px;top:33px;" width="8" height="8" viewBox="0 0 8 8"><circle cx="4" cy="4" r="3" fill="#2b2b2b"/></svg>
<div class="t " style="left:141px;top:31px;"><u>N</u>ormal</div>
<div class="t " style="left:141px;top:51px;">Seitenumbruch-<u>V</u>orschau</div>
<div class="a" style="left:133px;top:71px;width:212px;height:1px;background:#d7d7d7"></div>
<div class="a" style="left:104px;top:76px;width:241px;height:20px;background:#91c9f7"></div>
<svg class="a" style="left:334px;top:84px;" width="5" height="7" viewBox="0 0 5 7"><path d="M0.5 0 L4.5 3.5 L0.5 7 Z" fill="#000"/></svg>
<div class="t " style="left:141px;top:79px;">S<u>y</u>mbolleisten</div>
<div class="a" style="left:104px;top:96px;width:26px;height:20px;background:#91c9f7"></div>
<svg class="a" style="left:110px;top:100px;" width="13" height="9" viewBox="0 0 13 9"><path d="M1.3 4.2 L4.5 7.3 L10.8 1.2" fill="none" stroke="#2b2b2b" stroke-width="1.4"/></svg>
<div class="t " style="left:141px;top:99px;"><u>R</u>echenleiste</div>
<div class="a" style="left:104px;top:116px;width:26px;height:20px;background:#91c9f7"></div>
<svg class="a" style="left:110px;top:120px;" width="13" height="9" viewBox="0 0 13 9"><path d="M1.3 4.2 L4.5 7.3 L10.8 1.2" fill="none" stroke="#2b2b2b" stroke-width="1.4"/></svg>
<div class="t " style="left:141px;top:119px;"><u>S</u>tatusleiste</div>
<div class="t " style="left:141px;top:139px;color:#8a8a8a;"><u>E</u>ingabemethode-Status</div>
<div class="a" style="left:133px;top:159px;width:212px;height:1px;background:#d7d7d7"></div>
<div class="a" style="left:104px;top:164px;width:26px;height:20px;background:#91c9f7"></div>
<svg class="a" style="left:110px;top:168px;" width="13" height="9" viewBox="0 0 13 9"><path d="M1.3 4.2 L4.5 7.3 L10.8 1.2" fill="none" stroke="#2b2b2b" stroke-width="1.4"/></svg>
<div class="t " style="left:141px;top:167px;">Spalten-/<u>Z</u>eilenköpfe</div>
<div class="t " style="left:141px;top:187px;"><u>W</u>erte hervorheben</div>
<div class="t" style="right:744px;top:187px;transform:scaleX(0.945);transform-origin:100% 0;">Strg+F8</div>
<div class="a" style="left:133px;top:207px;width:212px;height:1px;background:#d7d7d7"></div>
<div class="t " style="left:141px;top:217px;">Daten<u>q</u>uellen</div>
<div class="t" style="right:744px;top:217px;">F4</div>
<div class="t " style="left:141px;top:241px;"><u>N</u>avigator</div>
<div class="t" style="right:744px;top:241px;">F5</div>
<div class="t " style="left:141px;top:263px;">Seiten<u>l</u>eiste</div>
<div class="a" style="left:133px;top:283px;width:212px;height:1px;background:#d7d7d7"></div>
<div class="t " style="left:141px;top:293px;transform:scaleX(0.965);transform-origin:0 0;"><u>G</u>anzer Bildschirm</div>
<div class="t" style="right:744px;top:293px;transform:scaleX(0.98);transform-origin:100% 0;">Strg+Umschalt+J</div>
<div class="t " style="left:141px;top:317px;"><u>M</u>aßstab...</div>
<svg class="a" style="left:111px;top:215px;" width="15" height="17" viewBox="0 0 15 17"><defs><linearGradient id="dbg" x1="0" x2="1"><stop offset="0" stop-color="#7d7d7d"/><stop offset=".45" stop-color="#e8e8e8"/><stop offset="1" stop-color="#6a6a6a"/></linearGradient></defs><path d="M1.5 3 V13.5 A6 2.5 0 0 0 13.5 13.5 V3" fill="url(#dbg)" stroke="#505050"/><ellipse cx="7.5" cy="3" rx="6" ry="2.3" fill="#eee" stroke="#505050"/><path d="M1.5 6.8 A6 2.3 0 0 0 13.5 6.8 M1.5 10.2 A6 2.3 0 0 0 13.5 10.2" fill="none" stroke="#505050"/></svg>
<svg class="a" style="left:110px;top:239px;" width="17" height="17" viewBox="0 0 17 17"><circle cx="8.5" cy="8.5" r="7.2" fill="#f2f5f9" stroke="#5a5a5a" stroke-width="1"/><circle cx="8.5" cy="8.5" r="6.2" fill="none" stroke="#444" stroke-width="1.1" stroke-dasharray="0.9 2.35"/><path d="M4 13 L6.9 6.9 L10.1 10.1 Z" fill="#e01818"/><path d="M13.2 3.8 L6.9 6.9 L10.1 10.1 Z" fill="#1a48e0"/></svg>
<svg class="a" style="left:111px;top:293px;" width="17" height="14" viewBox="0 0 17 14"><rect x="0.5" y="0.5" width="15" height="13" fill="#e0e0e0" stroke="#7a7a7a"/><rect x="2" y="2" width="12" height="10" fill="#3a7fc0" stroke="#1a3f90"/></svg>
<svg class="a" style="left:110px;top:314px;" width="17" height="18" viewBox="0 0 17 18"><path d="M10.5 11 L15 15.5" stroke="#a07000" stroke-width="3.4" stroke-linecap="round"/><path d="M10.5 11 L15 15.5" stroke="#f0c020" stroke-width="2" stroke-linecap="round"/><circle cx="6.5" cy="7" r="5.3" fill="#cfe3f5" stroke="#3a3a3a" stroke-width="1.3"/></svg>
<div class="a" style="left:345px;top:71px;width:255px;height:438px;background:#f2f2f2;border:1px solid #808080;box-shadow:3px 3px 3px -1px rgba(0,0,0,.5)"></div>
<div class="a" style="left:375px;top:72px;width:3px;height:436px;background:#efefef"></div>
<div class="a" style="left:378px;top:72px;width:1px;height:436px;background:#f4f4f4"></div>
<div class="t " style="left:385px;top:77px;"><u>3</u>D-Einstellungen</div>
<div class="t " style="left:385px;top:97px;">Ausri<u>c</u>htung</div>
<div class="t " style="left:385px;top:117px;"><u>B</u>ild</div>
<div class="t " style="left:385px;top:137px;"><u>E</u>infügen</div>
<div class="t " style="left:385px;top:157px;"><u>F</u>ontwork</div>
<div class="a" style="left:348px;top:174px;width:26px;height:20px;background:#91c9f7"></div>
<svg class="a" style="left:354px;top:178px;" width="13" height="9" viewBox="0 0 13 9"><path d="M1.3 4.2 L4.5 7.3 L10.8 1.2" fill="none" stroke="#2b2b2b" stroke-width="1.4"/></svg>
<div class="t " style="left:385px;top:177px;">For<u>m</u>at</div>
<div class="a" style="left:348px;top:194px;width:26px;height:20px;background:#91c9f7"></div>
<svg class="a" style="left:354px;top:198px;" width="13" height="9" viewBox="0 0 13 9"><path d="M1.3 4.2 L4.5 7.3 L10.8 1.2" fill="none" stroke="#2b2b2b" stroke-width="1.4"/></svg>
<div class="t " style="left:385px;top:197px;">F<u>o</u>rmular-Entwurf</div>
<div class="t " style="left:385px;top:217px;">Formular-Na<u>v</u>igation</div>
<div class="a" style="left:348px;top:234px;width:26px;height:20px;background:#91c9f7"></div>
<svg class="a" style="left:354px;top:238px;" width="13" height="9" viewBox="0 0 13 9"><path d="M1.3 4.2 L4.5 7.3 L10.8 1.2" fill="none" stroke="#2b2b2b" stroke-width="1.4"/></svg>
<div class="t " style="left:385px;top:237px;">Formular-<u>S</u>teuerelemente</div>
<div class="t " style="left:385px;top:257px;">Me<u>d</u>ienwiedergabe</div>
<div class="a" style="left:348px;top:274px;width:26px;height:20px;background:#91c9f7"></div>
<svg class="a" style="left:354px;top:278px;" width="13" height="9" viewBox="0 0 13 9"><path d="M1.3 4.2 L4.5 7.3 L10.8 1.2" fill="none" stroke="#2b2b2b" stroke-width="1.4"/></svg>
<div class="t " style="left:385px;top:277px;">S<u>t</u>andard</div>
<div class="t " style="left:385px;top:297px;">Suc<u>h</u>en</div>
<div class="t " style="left:385px;top:317px;">Te<u>x</u>tformat</div>
<div class="t " style="left:385px;top:337px;">Wer<u>k</u>zeuge</div>
<div class="t " style="left:385px;top:357px;"><u>Z</u>eichnen</div>
<div class="t " style="left:385px;top:377px;">Zeichnungsob<u>j</u>ekt-Eigenschaften</div>
<div class="t " style="left:385px;top:397px;">Ze<u>l</u>le einfügen</div>
<svg class="a" style="left:354px;top:416px;" width="20" height="20" viewBox="0 0 20 20"><circle cx="7" cy="7" r="5" fill="#3a86d0" stroke="#1a4a8a"/><path d="M3 5 Q4 3 6 4 L6.5 6 Q5 7 6 9 L4.5 10 Q3 8 3 5 Z M8 3.5 Q10 3 11 5 L10.5 7 Q9.5 6 9 8 L8 6 Z" fill="#d8e800"/><path d="M4 3 Q7 1.5 10 3" stroke="#a0d0ff" fill="none"/><path d="M11 5.5 V15 L13 13 L15 17 L16.5 16.3 L14.6 12.4 L17.2 12.2 Z" fill="#fff" stroke="#000" stroke-width=".9"/></svg>
<div class="t " style="left:385px;top:419px;">H<u>y</u>perlinkleiste</div>
<div class="a" style="left:348px;top:438px;width:26px;height:20px;background:#91c9f7"></div>
<svg class="a" style="left:354px;top:442px;" width="13" height="9" viewBox="0 0 13 9"><path d="M1.3 4.2 L4.5 7.3 L10.8 1.2" fill="none" stroke="#2b2b2b" stroke-width="1.4"/></svg>
<div class="t " style="left:385px;top:441px;"><u>R</u>echenleiste</div>
<div class="a" style="left:377px;top:461px;width:220px;height:1px;background:#d7d7d7"></div>
<div class="t " style="left:385px;top:469px;"><u>A</u>npassen...</div>
<div class="t " style="left:385px;top:489px;color:#8a8a8a;"><u>W</u>iederherstellen</div>
<svg class="a" style="left:0px;top:0px;pointer-events:none" width="1077" height="520" viewBox="0 0 1077 520"><g fill="none" stroke="#b8185e" stroke-linecap="round" stroke-linejoin="round"><path d="M109.3 87.9 Q114 87.5 118 84 Q121 80.5 122.5 79 Q122.6 86 122.2 92.8" stroke-width="5"/><path d="M345.7 199.8 Q352 199.5 356 202.5 Q357.5 206 352 210 Q346 214 346.7 216.5 Q350 219 357.8 219.6" stroke-width="4.8"/><path d="M970.1 198.7 Q979 198.5 982.7 202.1 Q981 206 976.2 206.9 Q985 209 984.8 214 Q984 221 969.7 220.7" stroke-width="4.6"/><path d="M1007.6 301 L986 259.5 M982.2 272.5 L986.5 259.5 L1001.5 267.3" stroke-width="4.2"/><path d="M1008.4 305 Q1003 309 1003.5 314 Q1005 322 1010.5 323.2 Q1017 322 1019 318 Q1020 313 1018.5 312 Q1013 306 1008.4 305 Z M1018 318.8 L1019.8 325" stroke-width="4.6"/><path d="M1028 310.8 Q1028 327.5 1033.5 327.8 Q1040.5 327 1041.5 321 Q1042 314 1041.6 309.5" stroke-width="4.6"/><path d="M1062.4 312.9 Q1060 310.5 1057 311.2 Q1054 313 1056 316 Q1061 319.5 1061.5 322 Q1061.5 326.5 1057 326.5 Q1051 326 1047.5 324" stroke-width="4.6"/></g></svg>
</body></html>
